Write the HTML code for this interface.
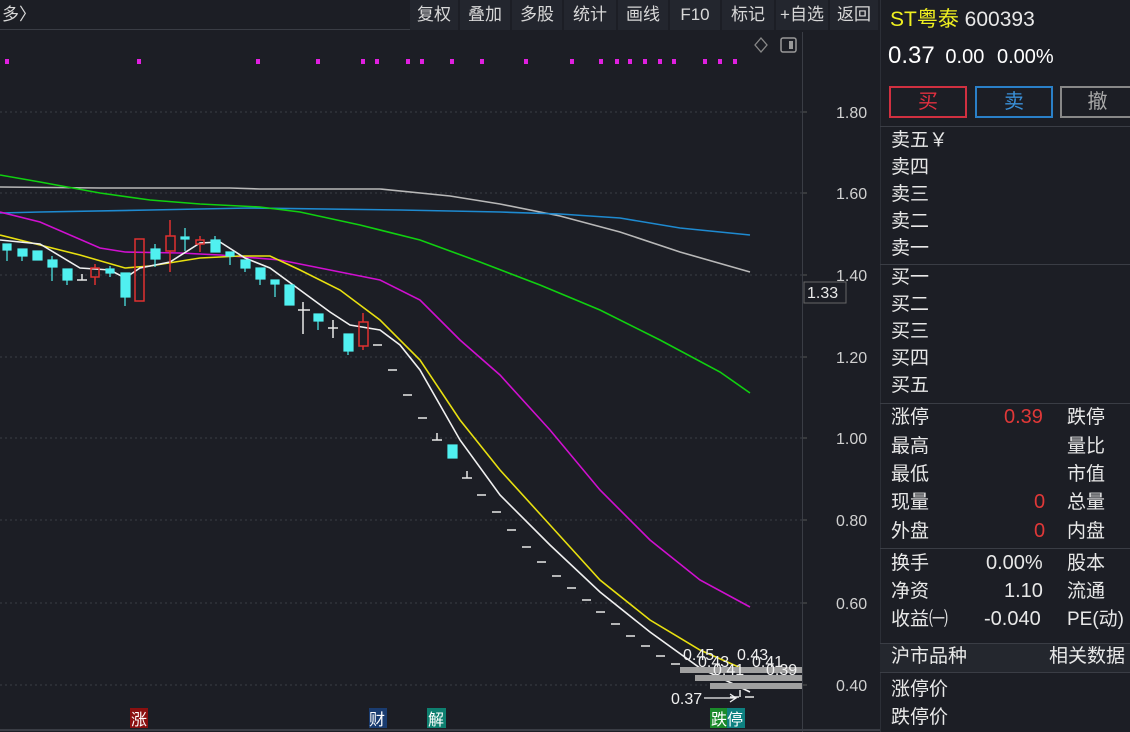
<!DOCTYPE html>
<html><head><meta charset="utf-8"><style>
*{margin:0;padding:0;box-sizing:border-box}
body{width:1130px;height:732px;background:#1c1e25;overflow:hidden;font-family:"Liberation Sans","Noto Sans CJK SC",sans-serif;color:#e6e6e6;position:relative}
.tb{position:absolute;top:0;height:30px;font-size:17px;line-height:30px;text-align:center;background:#23262e;color:#d8d8d8}
.rp{position:absolute;left:880px;top:0;width:250px;height:732px;border-left:1px solid #2c2f37}
.t{position:absolute;font-size:19px;white-space:nowrap;color:#e8e8e8;line-height:26px;margin-top:2px}
.n{position:absolute;font-size:20px;white-space:nowrap;color:#e8e8e8;line-height:26px;margin-top:1px}
.hl{position:absolute;left:880px;width:250px;height:1px;background:#3a3d45}
</style></head><body>
<div class="tb" style="left:0;width:410px;text-align:left;padding-left:2px;background:#1c1e25;border-bottom:1px solid #3a3d45">多〉</div>
<div class="tb" style="left:410px;width:48px">复权</div>
<div class="tb" style="left:460px;width:50px">叠加</div>
<div class="tb" style="left:512px;width:50px">多股</div>
<div class="tb" style="left:564px;width:52px">统计</div>
<div class="tb" style="left:618px;width:50px">画线</div>
<div class="tb" style="left:670px;width:50px">F10</div>
<div class="tb" style="left:722px;width:52px">标记</div>
<div class="tb" style="left:776px;width:52px">+自选</div>
<div class="tb" style="left:830px;width:48px">返回</div>

<svg style="position:absolute;left:0;top:0" width="880" height="732">
<g stroke="#3a3d45" stroke-dasharray="2,3" stroke-width="1">
<line x1="0" y1="112" x2="802" y2="112"/><line x1="0" y1="193" x2="802" y2="193"/><line x1="0" y1="275" x2="802" y2="275"/><line x1="0" y1="357" x2="802" y2="357"/><line x1="0" y1="438" x2="802" y2="438"/><line x1="0" y1="520" x2="802" y2="520"/><line x1="0" y1="603" x2="802" y2="603"/><line x1="0" y1="685" x2="802" y2="685"/>
</g>
<line x1="802.5" y1="32" x2="802.5" y2="732" stroke="#3a3d45"/>
<line x1="0" y1="730" x2="880" y2="730" stroke="#3a3d45" stroke-width="2"/>
<g fill="#e020e0">
<rect x="5" y="59" width="4" height="5"/><rect x="137" y="59" width="4" height="5"/><rect x="256" y="59" width="4" height="5"/><rect x="316" y="59" width="4" height="5"/><rect x="361" y="59" width="4" height="5"/><rect x="375" y="59" width="4" height="5"/><rect x="406" y="59" width="4" height="5"/><rect x="420" y="59" width="4" height="5"/><rect x="450" y="59" width="4" height="5"/><rect x="480" y="59" width="4" height="5"/><rect x="524" y="59" width="4" height="5"/><rect x="570" y="59" width="4" height="5"/><rect x="599" y="59" width="4" height="5"/><rect x="615" y="59" width="4" height="5"/><rect x="628" y="59" width="4" height="5"/><rect x="643" y="59" width="4" height="5"/><rect x="658" y="59" width="4" height="5"/><rect x="672" y="59" width="4" height="5"/><rect x="703" y="59" width="4" height="5"/><rect x="718" y="59" width="4" height="5"/><rect x="733" y="59" width="4" height="5"/>
</g>
<path d="M761 38l6 7-6 7-6-7z" fill="none" stroke="#888" stroke-width="1.3"/>
<rect x="781" y="38" width="15" height="14" rx="2" fill="none" stroke="#999" stroke-width="1.5"/><rect x="789" y="41" width="4" height="8" fill="#999"/>
<g fill="none" stroke-width="1.6">
<polyline stroke="#b8b8b8" points="0,187 100,188 230,188 260,189 380,189 450,196 500,204 560,216 620,232 680,252 750,272"/>
<polyline stroke="#1e8ad0" points="0,213 40,212 150,210 250,208 400,210 500,212 560,214 620,218 680,228 750,235"/>
<polyline stroke="#10d010" points="0,175 40,182 100,193 150,200 200,204 260,207 300,212 360,225 420,240 480,262 540,285 600,310 660,340 720,372 750,393"/>
<polyline stroke="#d010d0" points="0,212 40,222 100,248 125,252 180,253 220,255 280,260 340,272 380,280 420,300 460,340 500,375 550,430 600,490 650,540 700,580 750,607"/>
<polyline stroke="#e8e010" points="0,235 40,245 80,255 125,268 150,266 200,258 240,256 270,256 300,270 340,290 380,320 420,360 460,420 500,470 550,525 600,580 650,620 700,650 750,672"/>
<polyline stroke="#f0f0f0" points="0,240 40,244 80,268 110,270 125,278 140,268 170,262 200,243 220,242 245,258 270,268 300,290 330,312 350,325 380,330 400,345 420,370 460,440 500,495 550,545 600,592 650,632 700,668 750,692"/>
</g>
<g fill="#50f0f0" stroke="#50f0f0" stroke-width="1.2">
<rect x="3" y="244" width="8" height="6"/><line x1="7" y1="250" x2="7" y2="261"/>
<rect x="18" y="249" width="9" height="7"/><line x1="22" y1="256" x2="22" y2="261"/>
<rect x="33" y="251" width="9" height="9"/>
<rect x="48" y="260" width="9" height="7"/><line x1="52" y1="256" x2="52" y2="281"/>
<rect x="63" y="269" width="9" height="11"/><line x1="67" y1="280" x2="67" y2="285"/>
<rect x="106" y="269" width="8" height="4"/><line x1="110" y1="266" x2="110" y2="277"/>
<rect x="121" y="273" width="9" height="24"/><line x1="125" y1="297" x2="125" y2="306"/>
<rect x="151" y="249" width="9" height="10"/><line x1="155" y1="244" x2="155" y2="267"/>
<rect x="181" y="237" width="8" height="2"/><line x1="185" y1="228" x2="185" y2="251"/>
<rect x="211" y="240" width="9" height="12"/><line x1="215" y1="236" x2="215" y2="252"/>
<rect x="226" y="252" width="8" height="4"/><line x1="230" y1="252" x2="230" y2="265"/>
<rect x="241" y="260" width="9" height="8"/><line x1="245" y1="268" x2="245" y2="272"/>
<rect x="256" y="268" width="9" height="11"/><line x1="260" y1="279" x2="260" y2="285"/>
<rect x="271" y="280" width="8" height="4"/><line x1="275" y1="284" x2="275" y2="297"/>
<rect x="285" y="285" width="9" height="20"/>
<rect x="314" y="314" width="9" height="7"/><line x1="318" y1="321" x2="318" y2="330"/>
<rect x="344" y="334" width="9" height="17"/><line x1="348" y1="351" x2="348" y2="355"/>
<rect x="448" y="445" width="9" height="13"/>
</g>
<g fill="none" stroke="#e03030" stroke-width="1.5">
<rect x="91" y="268" width="8" height="9"/><line x1="95" y1="264" x2="95" y2="268"/><line x1="95" y1="277" x2="95" y2="285"/>
<rect x="135" y="239" width="9" height="62"/>
<rect x="166" y="236" width="9" height="15"/><line x1="170" y1="220" x2="170" y2="236"/><line x1="170" y1="251" x2="170" y2="272"/>
<rect x="196" y="240" width="8" height="4"/><line x1="200" y1="236" x2="200" y2="240"/><line x1="200" y1="244" x2="200" y2="252"/>
<rect x="359" y="322" width="9" height="24"/><line x1="363" y1="313" x2="363" y2="322"/><line x1="363" y1="346" x2="363" y2="350"/>
</g>
<g stroke="#e8e8e8" stroke-width="1.5" fill="none">
<path d="M77 280h10M82 274v6"/><path d="M298 310h12M303 302v32"/><path d="M328 328h10M333 320v18"/>
<path d="M373 345h9M388 370h9M403 395h9M418 418h9M432 440h10M437 433v7M462 478h10M467 471v7M477 495h9M492 512h9M507 530h9M522 547h9M537 562h9M552 576h9M567 588h9M582 600h9M596 612h9M611 624h9M626 636h9M641 646h9M656 656h9M671 664h9M686 672h9M700 680h9M715 688h9M730 697h9M745 697h9M740 690v7"/>
</g>
<rect x="680" y="667" width="122" height="6" fill="#a0a0a0"/>
<rect x="695" y="675" width="107" height="6" fill="#a0a0a0"/>
<rect x="710" y="683" width="92" height="6" fill="#a0a0a0"/>
<g font-size="16" fill="#f0f0f0" font-family="Liberation Sans,sans-serif">
<text x="683" y="660">0.45</text><text x="737" y="660">0.43</text>
<text x="698" y="667">0.43</text><text x="752" y="667">0.41</text>
<text x="713" y="675">0.41</text><text x="766" y="675">0.39</text>
<text x="671" y="704">0.37</text>
</g>
<path d="M704 698h32M730 694l6 4-6 4" stroke="#f0f0f0" fill="none" stroke-width="1.3"/>
<g font-size="16" fill="#d0d0d0" font-family="Liberation Sans,sans-serif">
<text x="836" y="118">1.80</text><text x="836" y="199">1.60</text><text x="836" y="281">1.40</text><text x="836" y="363">1.20</text><text x="836" y="444">1.00</text><text x="836" y="526">0.80</text><text x="836" y="609">0.60</text><text x="836" y="691">0.40</text>
</g>
<g stroke="#555"><line x1="803" y1="112" x2="807" y2="112"/><line x1="803" y1="193" x2="807" y2="193"/><line x1="803" y1="275" x2="807" y2="275"/><line x1="803" y1="357" x2="807" y2="357"/><line x1="803" y1="438" x2="807" y2="438"/><line x1="803" y1="520" x2="807" y2="520"/><line x1="803" y1="603" x2="807" y2="603"/><line x1="803" y1="685" x2="807" y2="685"/></g>
<rect x="804" y="282" width="42" height="21" fill="#1c1e25" stroke="#666"/>
<text x="807" y="298" font-size="16" fill="#e8e8e8" font-family="Liberation Sans,sans-serif">1.33</text>
<rect x="130" y="708" width="18" height="20" fill="#8a1010"/>
<text x="131" y="725" font-size="16" fill="#fff" font-family="Noto Sans CJK SC,sans-serif">涨</text>
<rect x="369" y="708" width="18" height="20" fill="#1a3c70"/>
<text x="369" y="725" font-size="16" fill="#fff" font-family="Noto Sans CJK SC,sans-serif">财</text>
<rect x="427" y="708" width="19" height="20" fill="#0e8070"/>
<text x="428" y="725" font-size="16" fill="#fff" font-family="Noto Sans CJK SC,sans-serif">解</text>
<rect x="710" y="708" width="17" height="20" fill="#1a8a2a"/><rect x="727" y="708" width="18" height="20" fill="#0e8080"/>
<text x="711" y="725" font-size="16" fill="#fff" font-family="Noto Sans CJK SC,sans-serif">跌停</text>
</svg>

<div class="rp"></div>
<div class="t" style="left:890px;top:5px;font-size:21px"><span style="color:#f0f020">ST粤泰</span> 600393</div>
<div class="t" style="left:888px;top:41px;font-size:24px;color:#fff">0.37 <span style="font-size:20px;margin-left:4px">0.00</span> <span style="font-size:20px;margin-left:6px">0.00%</span></div>
<div style="position:absolute;left:889px;top:86px;width:78px;height:32px;border:2px solid #d03040;color:#e03040;font-size:20px;text-align:center;line-height:28px">买</div>
<div style="position:absolute;left:975px;top:86px;width:78px;height:32px;border:2px solid #2a80c8;color:#3a90d8;font-size:20px;text-align:center;line-height:28px">卖</div>
<div style="position:absolute;left:1060px;top:86px;width:75px;height:32px;border:2px solid #888;color:#aaa;font-size:20px;text-align:center;line-height:28px">撤</div>
<div class="hl" style="top:126px"></div>
<div class="t" style="left:891px;top:126px">卖五￥</div>
<div class="t" style="left:891px;top:153px">卖四</div>
<div class="t" style="left:891px;top:180px">卖三</div>
<div class="t" style="left:891px;top:207px">卖二</div>
<div class="t" style="left:891px;top:234px">卖一</div>
<div class="hl" style="top:264px"></div>
<div class="t" style="left:891px;top:263px">买一</div>
<div class="t" style="left:891px;top:290px">买二</div>
<div class="t" style="left:891px;top:317px">买三</div>
<div class="t" style="left:891px;top:344px">买四</div>
<div class="t" style="left:891px;top:371px">买五</div>
<div class="hl" style="top:403px"></div>
<div class="t" style="left:891px;top:403px">涨停</div><div class="n" style="left:1004px;top:403px;color:#e03838">0.39</div><div class="t" style="left:1067px;top:403px">跌停</div>
<div class="t" style="left:891px;top:432px">最高</div><div class="t" style="left:1067px;top:432px">量比</div>
<div class="t" style="left:891px;top:460px">最低</div><div class="t" style="left:1067px;top:460px">市值</div>
<div class="t" style="left:891px;top:488px">现量</div><div class="n" style="left:1034px;top:488px;color:#e03838">0</div><div class="t" style="left:1067px;top:488px">总量</div>
<div class="t" style="left:891px;top:517px">外盘</div><div class="n" style="left:1034px;top:517px;color:#e03838">0</div><div class="t" style="left:1067px;top:517px">内盘</div>
<div class="hl" style="top:548px"></div>
<div class="t" style="left:891px;top:549px">换手</div><div class="n" style="left:986px;top:549px">0.00%</div><div class="t" style="left:1067px;top:549px">股本</div>
<div class="t" style="left:891px;top:577px">净资</div><div class="n" style="left:1004px;top:577px">1.10</div><div class="t" style="left:1067px;top:577px">流通</div>
<div class="t" style="left:891px;top:605px">收益㈠</div><div class="n" style="left:984px;top:605px">-0.040</div><div class="t" style="left:1067px;top:605px">PE(动)</div>
<div style="position:absolute;left:880px;top:643px;width:250px;height:30px;background:#24272e;border-top:1px solid #3a3d45;border-bottom:1px solid #3a3d45"></div>
<div class="t" style="left:891px;top:642px">沪市品种</div><div class="t" style="left:1049px;top:642px">相关数据</div>
<div class="t" style="left:891px;top:675px">涨停价</div>
<div class="t" style="left:891px;top:703px">跌停价</div>
</body></html>
